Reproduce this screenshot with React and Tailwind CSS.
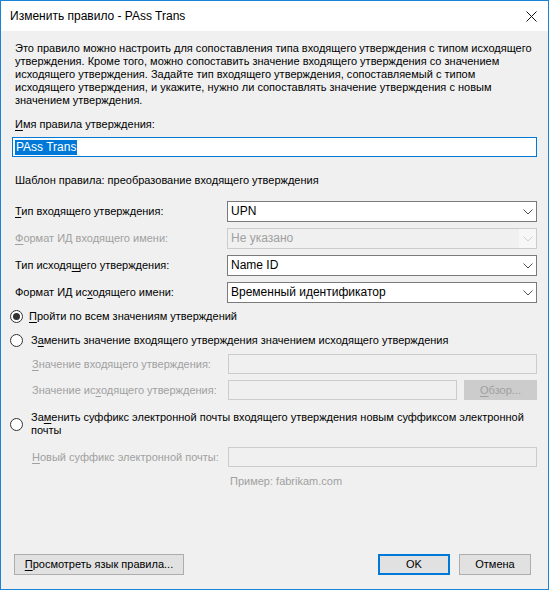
import React from 'react'

const font = { fontFamily: '"Liberation Sans", Arial, sans-serif' }

const Chevron = ({ disabled }) => (
  <svg width="10" height="6" viewBox="0 0 10 6" className="block">
    <path d="M0.5 0.5 L5 5 L9.5 0.5" fill="none" stroke={disabled ? '#cfcfcf' : '#505050'} strokeWidth="1" />
  </svg>
)

const Combo = ({ value, disabled }) => (
  <div
    className={`flex h-[21px] items-center border ${
      disabled ? 'border-[#cccccc] bg-[#f0f0f0] text-[#a0a0a0]' : 'border-[#7a7a7a] bg-white text-black'
    }`}
  >
    <span className="flex-1 truncate pl-[3px] text-[12px]">{value}</span>
    <span className={`flex h-full w-[17px] items-center justify-center ${disabled ? 'bg-[#f7f7f7]' : ''}`}>
      <Chevron disabled={disabled} />
    </span>
  </div>
)

const Radio = ({ checked }) => (
  <span className="flex h-[13px] w-[13px] shrink-0 items-center justify-center rounded-full border border-[#333333] bg-white">
    {checked && <span className="h-[7px] w-[7px] rounded-full bg-[#333333]" />}
  </span>
)

const U = ({ children }) => <span className="underline underline-offset-2">{children}</span>

const rows = [
  { label: <><U>Т</U>ип входящего утверждения:</>, value: 'UPN' },
  { label: <><U>Ф</U>ормат ИД входящего имени:</>, value: 'Не указано', disabled: true },
  { label: <>Тип исходя<U>щ</U>его утверждения:</>, value: 'Name ID' },
  { label: <>Формат ИД ис<U>х</U>одящего имени:</>, value: 'Временный идентификатор' },
]

export default function App() {
  return (
    <div
      style={font}
      className="flex h-[590px] w-[549px] flex-col border border-[#1883d7] bg-[#f0f0f0] text-[11px] leading-[13px] text-black"
    >
      <div className="flex h-[30px] shrink-0 items-center justify-between bg-white pl-[9px] pr-[11px]">
        <span className="text-[12px]">Изменить правило - PAss Trans</span>
        <svg width="11" height="11" viewBox="0 0 11 11">
          <path d="M0.5 0.5 L10.5 10.5 M10.5 0.5 L0.5 10.5" stroke="#111" strokeWidth="1" />
        </svg>
      </div>

      <div className="flex flex-1 flex-col pl-[14px] pr-[11px] pt-[11px]">
        <p className="pr-[4px]">
          Это правило можно настроить для сопоставления типа входящего утверждения с типом исходящего
          утверждения. Кроме того, можно сопоставить значение входящего утверждения со значением
          <br />
          исходящего утверждения. Задайте тип входящего утверждения, сопоставляемый с типом
          <br />
          исходящего утверждения, и укажите, нужно ли сопоставлять значение утверждения с новым
          <br />
          значением утверждения.
        </p>

        <div className="mt-[11px]">
          <U>И</U>мя правила утверждения:
        </div>
        <div className="-ml-[3px] mt-[6px] flex h-[20px] items-center border border-[#0078d7] bg-white pl-[2px]">
          <span className="bg-[#0078d7] px-[1px] text-[12px] leading-[15px] text-white">PAss Trans</span>
        </div>

        <div className="mt-[17px]">Шаблон правила: преобразование входящего утверждения</div>

        <div className="mt-[14px] grid grid-cols-[212px_1fr] gap-y-[6px]">
          {rows.map((r, i) => (
            <React.Fragment key={i}>
              <div className={`self-center ${r.disabled ? 'text-[#a0a0a0]' : ''}`}>{r.label}</div>
              <Combo value={r.value} disabled={r.disabled} />
            </React.Fragment>
          ))}
        </div>

        <div className="-ml-[5px] mt-[5px] flex h-[16px] items-center gap-[6px]">
          <Radio checked />
          <span>
            <U>П</U>ройти по всем значениям утверждений
          </span>
        </div>

        <div className="-ml-[5px] mt-[8px] flex h-[16px] items-center gap-[8px]">
          <Radio />
          <span>
            З<U>а</U>менить значение входящего утверждения значением исходящего утверждения
          </span>
        </div>

        <div className="mt-[6px] grid grid-cols-[196px_1fr] gap-y-[6px] pl-[17px] text-[#a0a0a0]">
          <div className="self-center">
            <U>З</U>начение входящего утверждения:
          </div>
          <div className="h-[20px] border border-[#cccccc] bg-[#f0f0f0]" />
          <div className="self-center">
            Значение ис<U>х</U>одящего утверждения:
          </div>
          <div className="flex gap-[7px]">
            <div className="h-[20px] flex-1 border border-[#cccccc] bg-[#f0f0f0]" />
            <div className="flex h-[20px] w-[73px] items-center justify-center border border-[#cccccc] bg-[#cccccc] text-[#a0a0a0]">
              <span>
                <U>О</U>бзор...
              </span>
            </div>
          </div>
        </div>

        <div className="-ml-[5px] mt-[11px] flex items-center gap-[8px]">
          <Radio />
          <span>
            За<U>м</U>енить суффикс электронной почты входящего утверждения новым суффиксом электронной
            <br />
            почты
          </span>
        </div>

        <div className="mt-[10px] grid grid-cols-[196px_1fr] pl-[17px] text-[#a0a0a0]">
          <div className="self-center whitespace-nowrap">
            <U>Н</U>овый суффикс электронной почты:
          </div>
          <div className="h-[20px] border border-[#cccccc] bg-[#f0f0f0]" />
          <div />
          <div className="mt-[8px] pl-[2px]">Пример: fabrikam.com</div>
        </div>

        <div className="mt-auto mb-[14px] flex items-center">
          <button
            type="button"
            className="-ml-[1px] flex h-[21px] w-[170px] items-center justify-center whitespace-nowrap border border-[#adadad] bg-[#e1e1e1]"
          >
            <span>
              <U>П</U>росмотреть язык правила...
            </span>
          </button>
          <button
            type="button"
            className="ml-auto flex h-[21px] w-[72px] items-center justify-center border-2 border-[#0078d7] bg-[#e1e1e1]"
          >
            OK
          </button>
          <button
            type="button"
            className="ml-[9px] mr-[6px] flex h-[21px] w-[72px] items-center justify-center border border-[#adadad] bg-[#e1e1e1]"
          >
            Отмена
          </button>
        </div>
      </div>
    </div>
  )
}
